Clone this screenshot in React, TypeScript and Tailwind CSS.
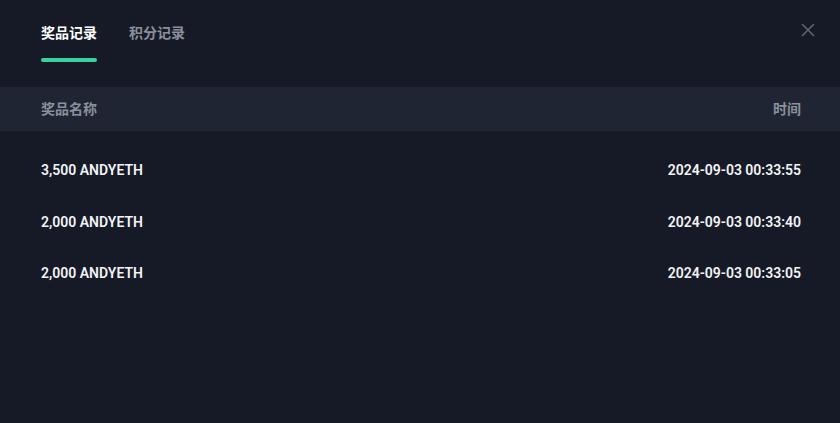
const ROWS = [
  { name: '3,500 ANDYETH', time: '2024-09-03 00:33:55' },
  { name: '2,000 ANDYETH', time: '2024-09-03 00:33:40' },
  { name: '2,000 ANDYETH', time: '2024-09-03 00:33:05' },
]

export default function App() {
  return (
    <div
      className="w-[840px] h-[423px] bg-[#161a26] text-white flex flex-col"
      style={{ fontFamily: 'Roboto, "Noto Sans CJK SC", sans-serif' }}
    >
      {/* tabs */}
      <div className="h-[87px] flex items-start justify-between pl-[41px] pr-[25px]">
        <div className="flex gap-[32px] pt-[23px]">
          <div className="flex flex-col items-center">
            <span className="text-[14px] leading-[20px] font-bold text-white">奖品记录</span>
            <span className="mt-[15px] w-[56px] h-[4px] rounded-full bg-[#3ad29f]" />
          </div>
          <span className="text-[14px] leading-[20px] font-bold text-[#8a909c]">积分记录</span>
        </div>
        <button className="mt-[23px] text-[#5d6372]">
          <svg width="14" height="14" viewBox="0 0 14 14" fill="none" stroke="currentColor" strokeWidth="1.6" strokeLinecap="round">
            <path d="M1.5 1.5L12.5 12.5M12.5 1.5L1.5 12.5" />
          </svg>
        </button>
      </div>

      {/* table header */}
      <div className="h-[44px] bg-[#1f2532] flex items-center justify-between pl-[41px] pr-[39px] text-[14px] font-bold text-[#8a909c]">
        <span>奖品名称</span>
        <span>时间</span>
      </div>

      {/* rows */}
      <div className="pt-[14px] flex flex-col">
        {ROWS.map((r, i) => (
          <div key={i} className="h-[51.5px] flex items-center justify-between pl-[41px] pr-[39px] text-[14px] font-semibold text-[#f2f3f5]">
            <span>{r.name}</span>
            <span>{r.time}</span>
          </div>
        ))}
      </div>
    </div>
  )
}
